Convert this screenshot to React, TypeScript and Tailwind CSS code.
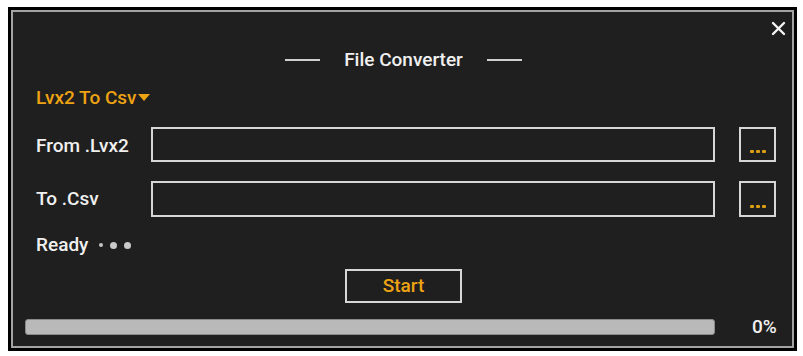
import React from "react";

export default function App() {
  const font = { fontFamily: "Roboto, 'Liberation Sans', sans-serif" };
  return (
    <div className="w-[803px] h-[356px] bg-white pt-[7px] pl-[8px]" style={font}>
      <div className="w-[789px] h-[344px] bg-black p-[3px]">
        <div className="relative h-full border-2 border-[#a3a3a3] bg-[#1f1f1f] flex flex-col font-medium text-[#f0f0f0]">
          <button className="absolute top-[7px] right-[5px] w-[18px] h-[18px] flex items-center justify-center">
            <svg width="15" height="15" viewBox="0 0 15 15">
              <path d="M2 2 L13 13 M13 2 L2 13" stroke="#f5f5f5" strokeWidth="2.4" strokeLinecap="round" />
            </svg>
          </button>

          <div className="mt-[36px] h-[24px] flex items-center justify-center gap-[24px] pl-[2px]">
            <div className="w-[35px] h-[2px] bg-[#cfcfcf]" />
            <span className="text-[19px] leading-[24px]">File Converter</span>
            <div className="w-[35px] h-[2px] bg-[#cfcfcf]" />
          </div>

          <div className="mt-[14px] h-[24px] pl-[23px] flex items-center">
            <span className="text-[19px] leading-[24px] text-[#eea313]">Lvx2 To Csv</span>
            <svg width="12" height="7" viewBox="0 0 12 7" className="ml-[1px] -mt-[2px]">
              <path d="M0 0 H12 L6 7 Z" fill="#eea313" />
            </svg>
          </div>

          <div className="mt-[17px] flex items-center pl-[23px]">
            <span className="w-[115px] text-[19px] leading-[24px] mt-[2px]">From .Lvx2</span>
            <div className="w-[564px] h-[35px] border-2 border-[#d6d6d6]" />
            <div className="ml-[24px] w-[37px] h-[35px] border-2 border-[#d6d6d6] flex items-end justify-center gap-[2px] pb-[7px]">
              <span className="w-[4px] h-[3px] bg-[#dc9e12] rounded-[1px]" />
              <span className="w-[4px] h-[3px] bg-[#dc9e12] rounded-[1px]" />
              <span className="w-[4px] h-[3px] bg-[#dc9e12] rounded-[1px]" />
            </div>
          </div>

          <div className="mt-[19px] flex items-center pl-[23px]">
            <span className="w-[115px] text-[19px] leading-[24px]">To .Csv</span>
            <div className="w-[564px] h-[36px] border-2 border-[#d6d6d6]" />
            <div className="ml-[24px] w-[37px] h-[36px] border-2 border-[#d6d6d6] flex items-end justify-center gap-[2px] pb-[7px]">
              <span className="w-[4px] h-[3px] bg-[#dc9e12] rounded-[1px]" />
              <span className="w-[4px] h-[3px] bg-[#dc9e12] rounded-[1px]" />
              <span className="w-[4px] h-[3px] bg-[#dc9e12] rounded-[1px]" />
            </div>
          </div>

          <div className="mt-[16px] h-[24px] pl-[23px] flex items-center">
            <span className="text-[19px] leading-[24px]">Ready</span>
            <span className="ml-[11px] w-[4px] h-[4px] rounded-full bg-[#c4c4c4]" />
            <span className="ml-[7px] w-[7px] h-[7px] rounded-full bg-[#cacaca]" />
            <span className="ml-[7px] w-[7px] h-[7px] rounded-full bg-[#cacaca]" />
          </div>

          <div className="mt-[12px] flex justify-center pl-[2px]">
            <button className="w-[117px] h-[34px] border-2 border-[#d6d6d6] text-[19px] text-[#eea313] flex items-center justify-center">
              Start
            </button>
          </div>

          <div className="mt-[12px] flex items-center pl-[12px]">
            <div className="w-[690px] h-[16px] rounded-[3px] bg-[#b9b9b9] border border-[#8a8a8a]" />
            <span className="ml-[37px] text-[19px] leading-[24px]">0%</span>
          </div>
        </div>
      </div>
    </div>
  );
}
